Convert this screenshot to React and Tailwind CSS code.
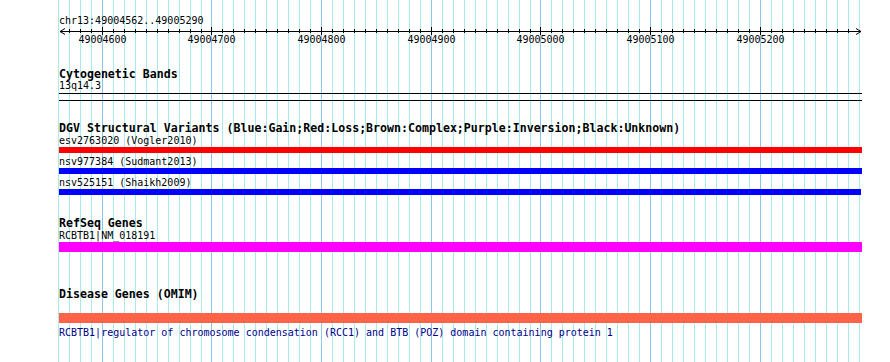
import React from "react";

const xOf = (bp) => 102.3 + (bp - 49004600) * 1.09667;

function Grid() {
  const lines = [];
  for (let bp = 49004560; bp <= 49005290; bp += 10) {
    const x = Math.floor(xOf(bp)) + 0.5;
    const major = bp % 100 === 0;
    lines.push(
      <line key={bp} x1={x} x2={x} y1={0} y2={362} stroke={major ? "#8ac6ec" : "#a6ebf0"} strokeWidth={1} />
    );
  }
  return (
    <svg className="absolute left-0 top-0" width="890" height="362">
      {lines}
    </svg>
  );
}

function Ruler() {
  const ox = 59;
  const ticks = [];
  const labels = [];
  for (let bp = 49004570; bp <= 49005280; bp += 10) {
    const x = Math.floor(xOf(bp)) + 0.5 - ox;
    const major = bp % 100 === 0;
    ticks.push(
      <line key={bp} x1={x} x2={x} y1={major ? 0 : 2} y2={major ? 8 : 6} stroke="#000" strokeWidth={1} />
    );
    if (major) {
      labels.push(
        <text key={"l" + bp} x={x} y={16} textAnchor="middle" fontSize="10" fontFamily="'DejaVu Sans Mono', monospace" fill="#000">
          {bp}
        </text>
      );
    }
  }
  return (
    <svg width="803" height="20" className="block">
      <line x1={1} x2={802} y1={4.5} y2={4.5} stroke="#000" strokeWidth={1} />
      <polyline points="6,1.5 1,4.5 6,7.5" fill="none" stroke="#000" strokeWidth={1} />
      <polyline points="797,1.5 802,4.5 797,7.5" fill="none" stroke="#000" strokeWidth={1} />
      {ticks}
      {labels}
    </svg>
  );
}

const T = ({ children, className = "" }) => (
  <div className={"h-[12px] text-[10px] leading-[12px] whitespace-pre " + className}>{children}</div>
);
const H = ({ children }) => (
  <div className="h-[12px] text-[11.6px] leading-[12px] font-bold whitespace-pre">{children}</div>
);

export default function App() {
  return (
    <div className="relative w-[890px] h-[362px] bg-white overflow-hidden text-black font-['DejaVu_Sans_Mono',monospace]">
      <Grid />
      <div className="relative flex flex-col pl-[59px] w-[862px]">
        <div className="h-[15px]" />
        <T>chr13:49004562..49005290</T>
        <Ruler />
        <div className="h-[21px]" />
        <H>Cytogenetic Bands</H>
        <T>13q14.3</T>
        <div className="mt-[1px] h-[1px] bg-black" />
        <div className="mt-[6px] h-[1px] bg-black" />
        <div className="h-[21px]" />
        <H>DGV Structural Variants (Blue:Gain;Red:Loss;Brown:Complex;Purple:Inversion;Black:Unknown)</H>
        <div className="h-[1px]" />
        <T>esv2763020 (Vogler2010)</T>
        <div className="h-[6px] bg-[#ff0000]" />
        <div className="h-[3px]" />
        <T>nsv977384 (Sudmant2013)</T>
        <div className="h-[6px] bg-[#0000ff]" />
        <div className="h-[3px]" />
        <T>nsv525151 (Shaikh2009)</T>
        <div className="h-[6px] bg-[#0000ff] mr-[1px]" />
        <div className="h-[22px]" />
        <H>RefSeq Genes</H>
        <div className="h-[1px]" />
        <T>RCBTB1|NM_018191</T>
        <div className="h-[10px] bg-[#ff00ff]" />
        <div className="h-[36px]" />
        <H>Disease Genes (OMIM)</H>
        <div className="h-[13px]" />
        <div className="h-[10px] bg-[#ff6347]" />
        <div className="h-[4px]" />
        <T className="text-[#00008b]">RCBTB1|regulator of chromosome condensation (RCC1) and BTB (POZ) domain containing protein 1</T>
      </div>
    </div>
  );
}
